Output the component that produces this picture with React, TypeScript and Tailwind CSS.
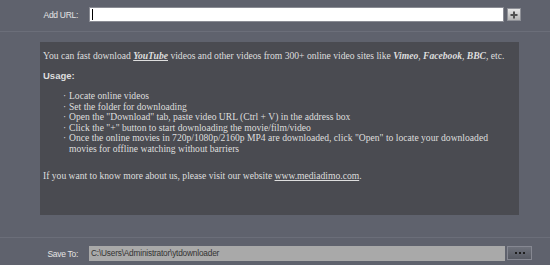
import React from 'react'

const sans = { fontFamily: '"Liberation Sans", Arial, sans-serif' }
const serif = { fontFamily: '"Liberation Serif", "Times New Roman", serif' }

const steps = [
  'Locate online videos',
  'Set the folder for downloading',
  'Open the "Download" tab, paste video URL (Ctrl + V) in the address box',
  'Click the "+" button to start downloading the movie/film/video',
  'Once the online movies in 720p/1080p/2160p MP4 are downloaded, click "Open" to locate your downloaded movies for offline watching without barriers',
]

export default function App() {
  return (
    <div className="flex h-[265px] w-[550px] flex-col overflow-hidden bg-[#5f626d] text-[#e2e2e2]" style={sans}>
      {/* url row */}
      <div className="flex h-[32px] shrink-0 items-start border-b border-[#6b6e79] pt-[7px]">
        <label className="w-[78px] pt-[2px] text-right text-[8.5px] leading-[12px] tracking-[-0.3px] text-[#e4e4e4]">Add URL:</label>
        <div className="ml-[11px] flex h-[15px] w-[415px] items-center border border-[#8a8c94] bg-white pl-[2px]">
          <span className="h-[11px] w-px bg-black" />
        </div>
        <button
          type="button"
          className="ml-[3px] mt-px flex h-[13px] w-[14px] items-center justify-center border border-[#8e9097] bg-gradient-to-b from-[#e6e6e6] to-[#b4b4b4]"
        >
          <svg width="8" height="8" viewBox="0 0 8 8">
            <path d="M4 0.5v7M0.5 4h7" stroke="#505050" strokeWidth="2" />
          </svg>
        </button>
      </div>

      {/* info panel */}
      <div className="mt-[10px] ml-[40px] h-[173px] w-[479px] shrink-0 bg-[#4a4b51] pl-[3px] pt-[8px] text-[#dedede]" style={serif}>
        <p className="text-[9.6px] leading-[12px]">
          You can fast download <b className="italic underline">YouTube</b> videos and other videos from 300+ online video sites like{' '}
          <b className="italic">Vimeo</b>, <b className="italic">Facebook</b>, <b className="italic">BBC</b>, etc.
        </p>
        <p className="mt-[8px] text-[9.5px] font-bold leading-[12px]" style={sans}>Usage:</p>
        <ul className="mt-[9px] pl-[20px] pr-[20px] text-[9.6px] leading-[10.5px]">
          {steps.map((s) => (
            <li key={s} className="flex">
              <span className="w-[6px] shrink-0">·</span>
              <span>{s}</span>
            </li>
          ))}
        </ul>
        <p className="mt-[16px] text-[9.6px] leading-[12px]">
          If you want to know more about us, please visit our website <span className="underline">www.mediadimo.com</span>.
        </p>
      </div>

      {/* save row */}
      <div className="mt-[22px] flex flex-1 items-start border-t border-[#6b6e79] pt-[8px]">
        <label className="w-[78px] pt-[2px] text-right text-[8.5px] leading-[12px] tracking-[-0.3px] text-[#e4e4e4]">Save To:</label>
        <div className="ml-[11px] flex h-[15px] w-[416px] items-center bg-[#a9a9a9] pl-[2px] text-[8.3px] tracking-[-0.2px] text-[#333]">
          C:\Users\Administrator\ytdownloader
        </div>
        <button
          type="button"
          className="ml-[2px] flex h-[14px] w-[25px] items-center justify-center gap-[2px] border border-[#868892] bg-gradient-to-b from-[#6e717b] to-[#575a63]"
        >
          <span className="h-[2px] w-[2px] bg-[#1e1e1e]" />
          <span className="h-[2px] w-[2px] bg-[#1e1e1e]" />
          <span className="h-[2px] w-[2px] bg-[#1e1e1e]" />
        </button>
      </div>
    </div>
  )
}
